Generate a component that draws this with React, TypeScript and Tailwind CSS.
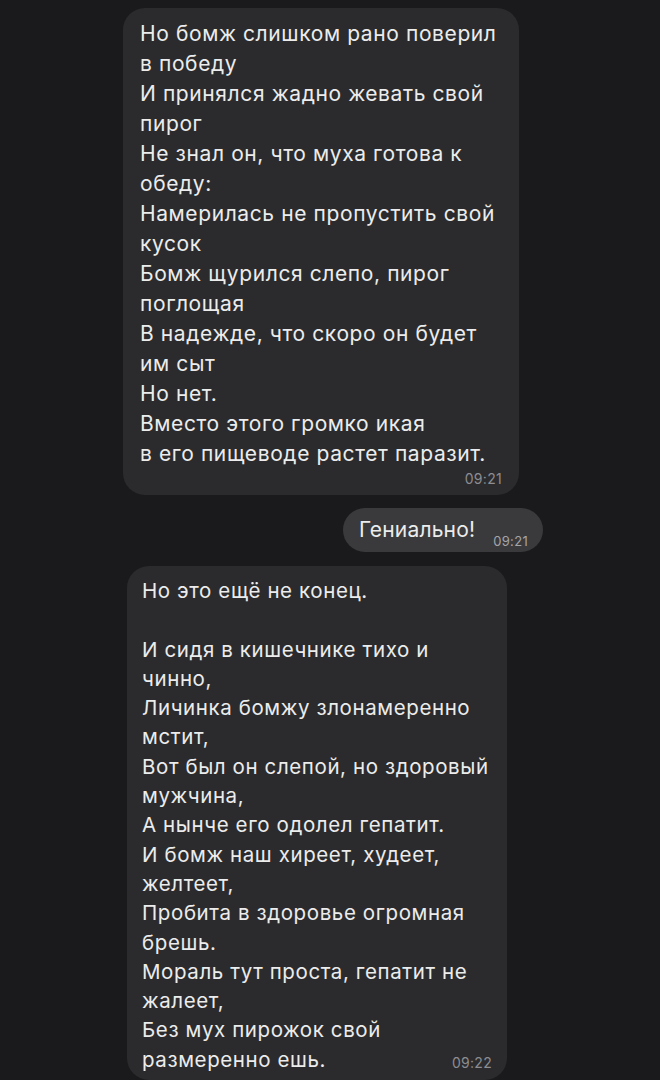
const first = [
  "Но бомж слишком рано поверил",
  "в победу",
  "И принялся жадно жевать свой",
  "пирог",
  "Не знал он, что муха готова к",
  "обеду:",
  "Намерилась не пропустить свой",
  "кусок",
  "Бомж щурился слепо, пирог",
  "поглощая",
  "В надежде, что скоро он будет",
  "им сыт",
  "Но нет.",
  "Вместо этого громко икая",
  "в его пищеводе растет паразит.",
];

const second = [
  "Но это ещё не конец.",
  "",
  "И сидя в кишечнике тихо и",
  "чинно,",
  "Личинка бомжу злонамеренно",
  "мстит,",
  "Вот был он слепой, но здоровый",
  "мужчина,",
  "А нынче его одолел гепатит.",
  "И бомж наш хиреет, худеет,",
  "желтеет,",
  "Пробита в здоровье огромная",
  "брешь.",
  "Мораль тут проста, гепатит не",
  "жалеет,",
  "Без мух пирожок свой",
];

export default function App() {
  return (
    <div
      className="h-[1080px] w-[660px] overflow-hidden bg-[#1a1a1c] text-[#ececec] flex flex-col"
      style={{ fontFamily: 'Inter, "Liberation Sans", sans-serif' }}
    >
      {/* incoming */}
      <div className="mt-[8px] ml-[123px] w-[396px] rounded-[22px] bg-[#2b2b2d] pl-[17px] pr-[17px] pt-[11px] pb-[8px]">
        {first.map((l, i) => (
          <div key={i} className="whitespace-nowrap text-[21px] leading-[30px] tracking-[0.6px]">
            {l}
          </div>
        ))}
        <div className="flex justify-end pt-[2px] text-[14px] leading-[16px] tracking-[0.3px] text-[#8d8d91]">09:21</div>
      </div>

      {/* outgoing */}
      <div className="mt-[13px] ml-[343px] w-[200px] h-[45px] rounded-[23px] bg-[#3a3a3c] flex items-center pl-[16px]">
        <span className="text-[21px] leading-[30px] tracking-[0.2px]">Гениально!</span>
        <span className="ml-[18px] mt-[22px] text-[13px] leading-[16px] tracking-[0.3px] text-[#a5a5a9]">09:21</span>
      </div>

      {/* incoming */}
      <div className="mt-[14px] ml-[127px] w-[380px] rounded-[22px] bg-[#2b2b2d] pl-[15px] pr-[15px] pt-[10px] pb-[6px]">
        {second.map((l, i) => (
          <div key={i} className="whitespace-nowrap text-[20.5px] leading-[29.3px] h-[29.3px] tracking-[0.6px]">
            {l}
          </div>
        ))}
        <div className="flex items-end justify-between">
          <span className="whitespace-nowrap text-[20.5px] leading-[29.3px] tracking-[0.6px]">размеренно ешь.</span>
          <span className="mb-[3px] text-[14px] leading-[16px] tracking-[0.3px] text-[#8d8d91]">09:22</span>
        </div>
      </div>
    </div>
  );
}
